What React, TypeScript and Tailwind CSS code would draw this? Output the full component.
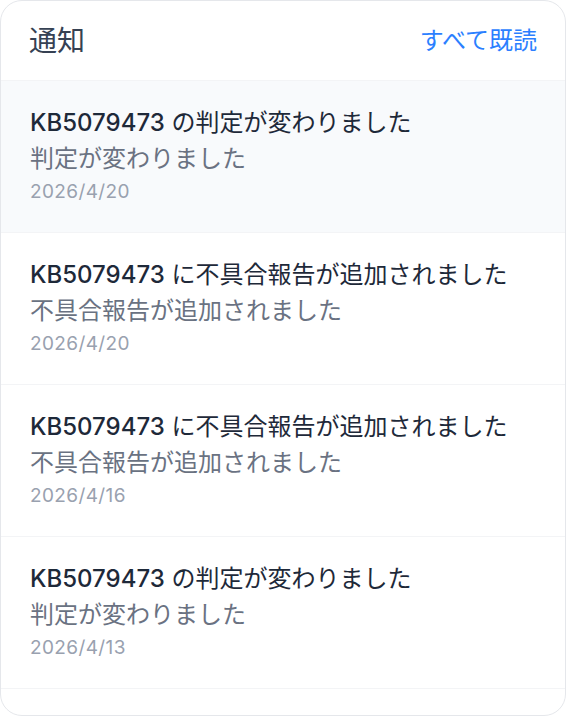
const items = [
  { code: "KB5079473", title: "の判定が変わりました", body: "判定が変わりました", date: "2026/4/20", unread: true },
  { code: "KB5079473", title: "に不具合報告が追加されました", body: "不具合報告が追加されました", date: "2026/4/20", unread: false },
  { code: "KB5079473", title: "に不具合報告が追加されました", body: "不具合報告が追加されました", date: "2026/4/16", unread: false },
  { code: "KB5079473", title: "の判定が変わりました", body: "判定が変わりました", date: "2026/4/13", unread: false },
];

export default function App() {
  return (
    <div className="min-h-screen bg-white font-['Inter','Noto_Sans_CJK_JP',sans-serif]">
      <div className="flex h-[716px] flex-col overflow-hidden rounded-[22px] border border-gray-200 bg-white">
        <header className="flex h-[80px] shrink-0 items-center justify-between border-b border-gray-100 px-[28px]">
          <h2 className="text-[28px] leading-none font-normal text-gray-700">通知</h2>
          <button type="button" className="text-[24px] leading-none text-blue-500">
            すべて既読
          </button>
        </header>

        <ul>
          {items.map((n, i) => (
            <li
              key={i}
              className={
                n.unread
                  ? "border-b border-gray-100 bg-slate-50 px-[29px] pt-6 pb-[25px]"
                  : "border-b border-gray-100 px-[29px] pt-6 pb-[25px]"
              }
            >
              <p className="text-[24px] leading-[36px] text-gray-800">
                <span className="font-medium">{n.code}</span> {n.title}
              </p>
              <p className="text-[24px] leading-[36px] text-gray-500">{n.body}</p>
              <p className="text-[19px] leading-[30px] tracking-[0.02em] text-gray-400">{n.date}</p>
            </li>
          ))}
        </ul>
      </div>
    </div>
  );
}
